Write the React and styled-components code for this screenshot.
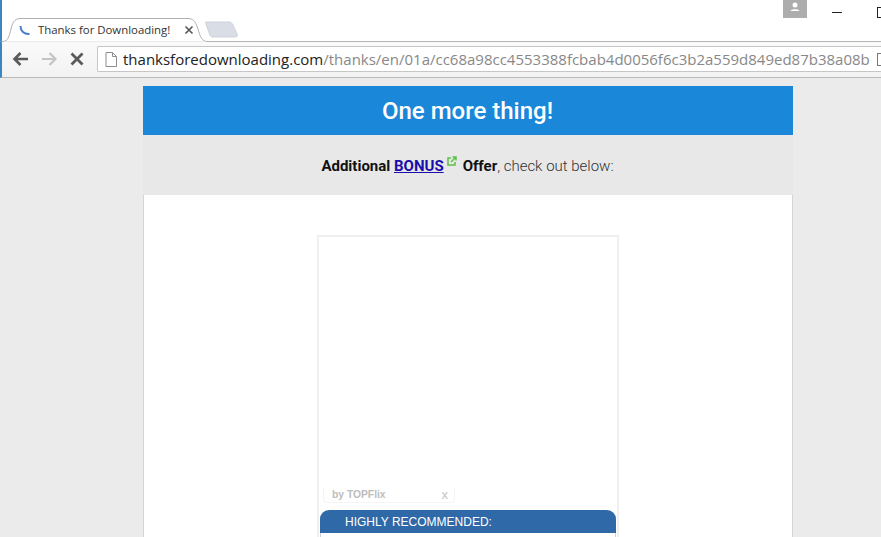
import React from 'react';
import styled, { createGlobalStyle } from 'styled-components';

const GlobalStyle = createGlobalStyle`
  html, body {
    margin: 0;
    padding: 0;
    height: 100%;
    overflow: hidden;
    background: #ebebeb;
  }
`;

const Window = styled.div`
  width: 881px;
  height: 537px;
  overflow: hidden;
  display: flex;
  flex-direction: column;
  font-family: "Open Sans", sans-serif;
`;

const TitleBar = styled.div`
  height: 42px;
  flex: none;
  display: flex;
  align-items: flex-end;
  position: relative;
  background: #fff;
  border-left: 2px solid #3d85c0;
  border-bottom: 1px solid #b4b4b4;
  box-sizing: border-box;
`;

const Tab = styled.div`
  position: relative;
  width: 204px;
  height: 24px;
  margin-left: 1px;
  margin-bottom: -1px;
  display: flex;
  align-items: center;
  flex: none;
`;

const TabShape = styled.svg`
  position: absolute;
  left: 0;
  top: 0;
`;

const TabSpinner = styled.svg`
  position: relative;
  margin-left: 16px;
  top: 1px;
`;

const TabTitle = styled.span`
  position: relative;
  top: -1px;
  margin-left: 7px;
  font-size: 11.4px;
  color: #333;
  white-space: nowrap;
`;

const TabClose = styled.svg`
  position: relative;
  top: 0;
  margin-left: 14px;
`;

const NewTab = styled.svg`
  margin-left: -2px;
  margin-bottom: 3px;
`;

const Avatar = styled.div`
  position: absolute;
  left: 781px;
  top: 0;
  width: 24px;
  height: 18px;
  background: #adadad;
  display: flex;
  justify-content: center;
`;

const Minimize = styled.div`
  position: absolute;
  left: 830px;
  top: 12px;
  width: 10px;
  height: 1px;
  background: #222;
`;

const Maximize = styled.div`
  position: absolute;
  left: 875px;
  top: 7px;
  width: 10px;
  height: 9px;
  border: 1px solid #222;
`;

const Toolbar = styled.div`
  height: 36px;
  flex: none;
  box-sizing: border-box;
  display: flex;
  align-items: center;
  padding: 0 0 1px 10px;
  background: linear-gradient(#fafafa, #f2f2f2);
  border-left: 2px solid #3d85c0;
  border-bottom: 1px solid #b9b9b9;
`;

const NavIcon = styled.svg`
  flex: none;
  margin-right: ${(p) => p.$gap}px;
`;

const Omnibox = styled.div`
  flex: 1;
  height: 26px;
  box-sizing: border-box;
  display: flex;
  align-items: center;
  padding-left: 7px;
  background: #fff;
  border: 1px solid #c6c6c6;
  border-right: none;
  border-radius: 2px 0 0 2px;
`;

const Url = styled.div`
  margin-left: 6px;
  width: 750px;
  flex: none;
  overflow: hidden;
  white-space: nowrap;
  font-size: 15px;
  color: #888;
`;

const Host = styled.span`
  color: #222;
`;

const PageAction = styled.div`
  flex: none;
  width: 8px;
  height: 11px;
  margin-left: 4px;
  border: 1px solid #777;
  border-right: none;
`;

const Page = styled.div`
  flex: 1;
  min-height: 0;
  padding: 8px 0 0 143px;
  background: #ebebeb;
  overflow: hidden;
`;

const Card = styled.main`
  width: 650px;
  background: #fff;
  border-left: 1px solid #d4d4d4;
  border-right: 1px solid #d4d4d4;
  box-sizing: border-box;
`;

const Banner = styled.h1`
  margin: 0 -1px;
  height: 49px;
  padding-right: 1px;
  background: #1a87d9;
  color: #fff;
  font-family: Roboto, sans-serif;
  font-size: 24px;
  font-weight: 500;
  display: flex;
  align-items: center;
  justify-content: center;
`;

const Notice = styled.div`
  margin: 0 -1px;
  height: 60px;
  padding: 1px 1px 0 0;
  box-sizing: border-box;
  background: #e8e8e8;
  font-family: Roboto, sans-serif;
  font-size: 15px;
  font-weight: 300;
  color: #333;
  display: flex;
  align-items: center;
  justify-content: center;
  white-space: pre;
`;

const Strong = styled.b`
  color: #111;
  font-weight: 700;
`;

const BonusLink = styled.a`
  color: #1a0dab;
  font-weight: 700;
  text-decoration: underline;
`;

const External = styled.svg`
  margin: 0 6px 10px 3px;
`;

const Body = styled.div`
  padding-top: 41px;
  display: flex;
  justify-content: center;
`;

const AdFrame = styled.div`
  width: 302px;
  height: 320px;
  margin-top: -1px;
  box-sizing: border-box;
  border: 2px solid #f0f0f0;
  padding: 250px 1px 0 1px;
  display: flex;
  flex-direction: column;
`;

const AdTag = styled.div`
  width: 132px;
  height: 16px;
  box-sizing: border-box;
  margin-left: 3px;
  padding: 0 6px 0 8px;
  display: flex;
  align-items: center;
  justify-content: space-between;
  border: 1px solid #f4f4f4;
  border-top: none;
  border-radius: 0 0 4px 4px;
  font-family: "Liberation Sans", sans-serif;
  font-size: 10.3px;
  font-weight: 700;
  color: #bdbdbd;
`;

const AdClose = styled.span`
  font-weight: 400;
  font-size: 13px;
  color: #c4c4c4;
`;

const Recommended = styled.div`
  margin-top: 7px;
  height: 40px;
  border: 1px solid #c8d4e0;
  border-top: none;
  border-radius: 9px 9px 0 0;
  background: #fff;
`;

const RecommendedHead = styled.div`
  margin: 0 -1px;
  height: 23px;
  padding-left: 25px;
  display: flex;
  align-items: center;
  background: #3069a8;
  border-radius: 9px 9px 0 0;
  color: #fff;
  font-family: "Liberation Sans", sans-serif;
  font-size: 12px;
`;

function App() {
  return (
    <Window>
      <GlobalStyle />
      <TitleBar>
        <Tab>
          <TabShape width="204" height="24" viewBox="0 0 204 24">
            <path d="M0 23.5 C5 23 6 19 8 11 C9.500 5 11 1 17 .5 L186 .5 C191 1 193 5 195 11 C197 19 199 23 204 23.5 L204 24 L0 24 Z" fill="#fff" stroke="#b0b0b0" />
            <path d="M1 24 L203 24" stroke="#fdfdfd" />
          </TabShape>
          <TabSpinner width="12" height="12" viewBox="0 0 12 12">
            <path d="M1.500 1 C1.500 6 5 9.500 10.500 9" fill="none" stroke="#4a7fc4" strokeWidth="2" />
          </TabSpinner>
          <TabTitle>Thanks for Downloading!</TabTitle>
          <TabClose width="10" height="10" viewBox="0 0 10 10">
            <path d="M1.500 1.500 L8.500 8.500 M8.500 1.500 L1.500 8.500" stroke="#555" strokeWidth="1.600" />
          </TabClose>
        </Tab>
        <NewTab width="34" height="17" viewBox="0 0 34 17">
          <path d="M1 1 L24 1 C26 1 27 2 28 4 L32 13 C33 15 32 16 30 16 L8 16 C6 16 5 15 4.500 13 L1 3 C.5 1.500 .5 1 1 1 Z" fill="#d9dee6" stroke="#cdd2da" />
        </NewTab>
        <Avatar>
          <svg width="14" height="14" viewBox="0 0 14 14">
            <circle cx="7" cy="5" r="2.500" fill="#fff" />
            <path d="M2.500 11 C3 8.500 11 8.500 11.500 11 Z" fill="#fff" />
          </svg>
        </Avatar>
        <Minimize />
        <Maximize />
      </TitleBar>
      <Toolbar>
        <NavIcon $gap={12} width="17" height="16" viewBox="0 0 17 16">
          <path d="M16 8 L3 8 M8.500 2 L2.500 8 L8.500 14" fill="none" stroke="#5a5a5a" strokeWidth="2.600" />
        </NavIcon>
        <NavIcon $gap={12} width="17" height="16" viewBox="0 0 17 16">
          <path d="M1 8 L14 8 M8.500 2 L14.500 8 L8.500 14" fill="none" stroke="#c4c4c4" strokeWidth="2.200" />
        </NavIcon>
        <NavIcon $gap={13} width="14" height="14" viewBox="0 0 14 14">
          <path d="M1.500 1.500 L12.500 12.500 M12.500 1.500 L1.500 12.500" stroke="#5a5a5a" strokeWidth="2.800" />
        </NavIcon>
        <Omnibox>
          <svg width="12" height="15" viewBox="0 0 12 15">
            <path d="M1 .5 L7.500 .5 L11.500 4.500 L11.500 14.500 L1 14.500 Z M7.500 .5 L7.500 4.500 L11.500 4.500" fill="#fff" stroke="#8c8c8c" />
          </svg>
          <Url>
            <Host>thanksforedownloading.com</Host>/thanks/en/01a/cc68a98cc4553388fcbab4d0056f6c3b2a559d849ed87b38a08b
          </Url>
          <PageAction />
        </Omnibox>
      </Toolbar>
      <Page>
        <Card>
          <Banner>One more thing!</Banner>
          <Notice>
            <Strong>Additional </Strong>
            <BonusLink href="#bonus">BONUS</BonusLink>
            <External width="10" height="10" viewBox="0 0 10 10">
              <path d="M4 2 L1 2 L1 9 L8 9 L8 6 M4 6 L9 1 M5.500 1 L9 1 L9 4.500" fill="none" stroke="#5cc04a" strokeWidth="1.500" />
            </External>
            <Strong>Offer</Strong>, check out below:
          </Notice>
          <Body>
            <AdFrame>
              <AdTag>
                by TOPFlix
                <AdClose>x</AdClose>
              </AdTag>
              <Recommended>
                <RecommendedHead>HIGHLY RECOMMENDED:</RecommendedHead>
              </Recommended>
            </AdFrame>
          </Body>
        </Card>
      </Page>
    </Window>
  );
}

export default App;
